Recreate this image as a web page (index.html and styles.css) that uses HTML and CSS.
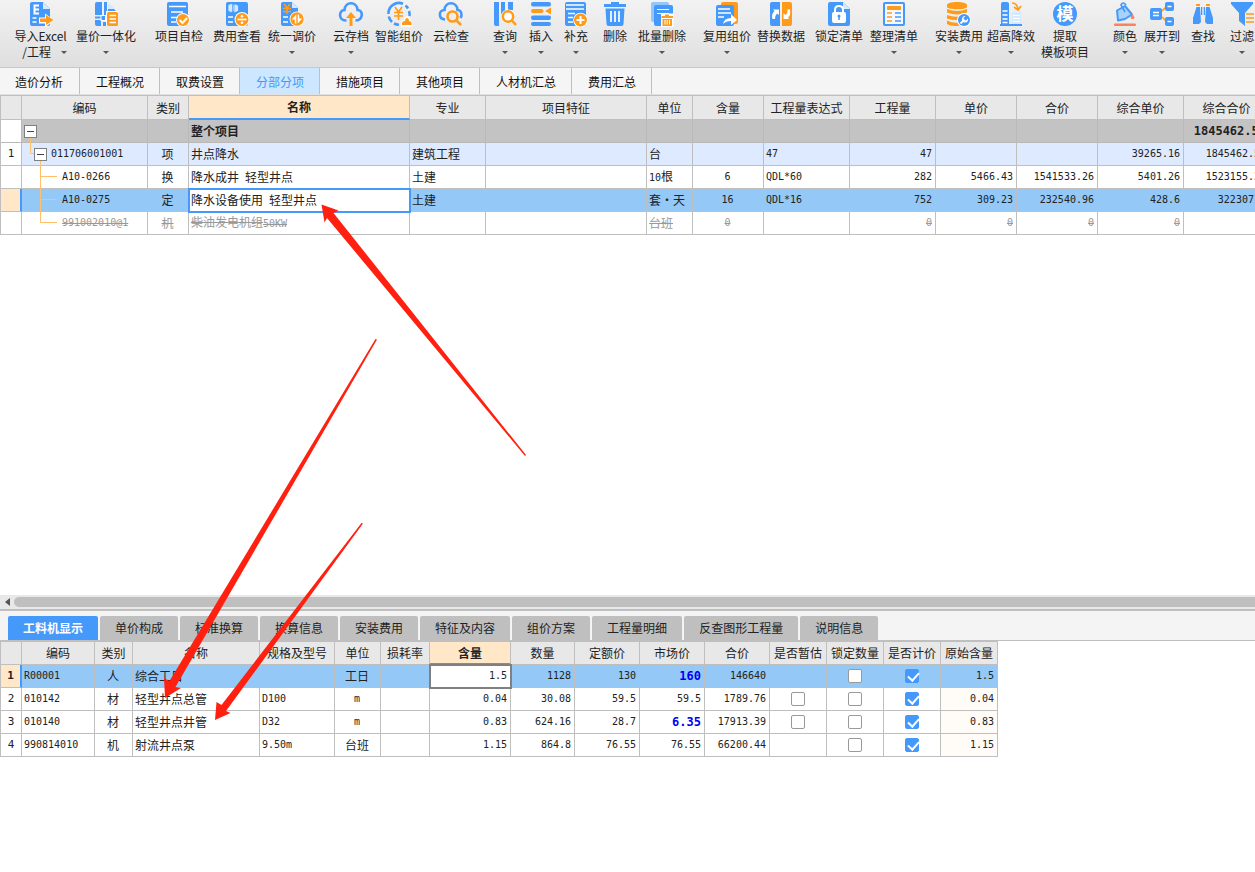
FILE: index.html
```
<!DOCTYPE html>
<html lang="zh-CN">
<head>
<meta charset="utf-8">
<title>分部分项</title>
<link rel="stylesheet" href="styles.css">
</head>
<body>
<div class="app">
<header class="toolbar">
  <button class="tool"><svg viewBox="0 0 24 24"><path class="b" d="M3 0h11l7 7v15q0 2-2 2H3q-2 0-2-2V2q0-2 2-2z"/><path class="l" d="M14 0l7 7h-7z"/><path class="ws" d="M10 3.500H5.500v8H10M5.500 7.500H10"/><path class="ws thin" d="M3.500 16h4M3.500 20h4"/><path class="w" d="M10 15.500h6v-4l9 6.500-9 7.500v-4h-6z"/><path class="o" d="M11 16.500h6v-3.500l7.500 5-7.500 5V20h-6z"/></svg><span>导入Excel</span><span class="sub">/工程<i class="caret"></i></span></button>
  <button class="tool"><svg viewBox="0 0 24 24"><path class="b" d="M3 0h5v13H1V2q0-2 2-2zM10 0h3v13h-3zM14 1l8 8v4h-8zM1 18h6v6H3q-2 0-2-2zM9 20h3v4H9z"/><path class="l" d="M14 0l7 7h-7z"/><path class="b" d="M1 14.500h12v2H1z"/><path class="w" d="M6.500 13h5.500v6H6.500zM12 9h12v15H12z"/><rect class="b" x="7.500" y="14" width="3.500" height="4"/><rect class="o" x="13" y="10" width="11" height="14" rx="1.500"/><path class="ws thin" d="M15.500 13.500h6.500M15.500 17h6.500M15.500 20.500h6.500"/></svg><span>量价一体化</span><i class="caret"></i></button>
  <button class="tool"><svg viewBox="0 0 24 24"><rect class="b" x="0" y="0" width="21" height="24" rx="2"/><path class="ws thin" d="M2 4.500h17M4 10h12M4 15.500h6M4 20h5"/><circle class="w" cx="16" cy="18" r="7"/><circle class="o" cx="16" cy="18" r="6"/><path class="ws" d="M12.500 18l3 3 4.500-5"/></svg><span>项目自检</span></button>
  <button class="tool"><svg viewBox="0 0 24 24"><rect class="b" x="1" y="0" width="22" height="24" rx="2"/><path class="l" d="M3 3l3-1.500L9 3v6L6 10.500 3 9zM7.500 3l2.500-1 3.500 1.500V9L10 10.500 7.500 9z" stroke="#4499fb" stroke-width=".7"/><path class="ws thin" d="M3 15h5M3 20h5"/><circle class="w" cx="17" cy="17.500" r="7.500"/><circle class="o" cx="17" cy="17.500" r="6.500"/><path class="ws thin" d="M12.500 17.500h9"/><circle class="w" cx="17" cy="14.300" r="1.300"/><circle class="w" cx="17" cy="20.700" r="1.300"/></svg><span>费用查看</span></button>
  <button class="tool"><svg viewBox="0 0 24 24"><path class="b" d="M3 0h9l6 6v18H3q-2 0-2-2V2q0-2 2-2z"/><path class="l" d="M12 0l6 6h-6z"/><path class="os thin" d="M4 2l3 4 3-4M7 6v6M3 6.500h8M3 9.500h8"/><path class="ws thin" d="M3 15h5M3 20h5"/><circle class="w" cx="17" cy="17" r="7.500"/><circle class="o" cx="17" cy="17" r="6.700"/><path class="w" d="M16.300 12.500v9h-1.500v-4h-3zM17.700 12.500v9l4.500-5h-3v-4z"/></svg><span>统一调价</span><i class="caret"></i></button>
  <button class="tool"><svg viewBox="0 0 24 24"><path class="bs" d="M7.500 18.500C-1 19-.5 8 5.500 8 6-1 18-1 18.500 8c6 0 6 10-2 10.500"/><path class="o" d="M12 10l5 6h-3.500v8h-3v-8H7z"/></svg><span>云存档</span><i class="caret"></i></button>
  <button class="tool"><svg viewBox="0 0 24 24"><path class="bs" d="M16 1.800A10.500 10.500 0 0 0 1.500 12M1.800 14.500A10.500 10.500 0 0 0 5 20M7 21.500A10.500 10.500 0 0 0 12 22.700M18.500 3.500A10.500 10.500 0 0 1 21 6.500M22 9A10.500 10.500 0 0 1 22.500 14"/><path class="os thin" d="M8 5l3.500 5L15 5M11.500 10v8M7 10.500h9M7 14h9"/><path class="w" d="M14 25c-1-6 2-7 3-7 0-5 6-5 6 0 2 1 3 3 2 7z"/><path class="o" d="M15 23c-.5-3 1-4 3-4 0-4 4-4 4 0 2 0 3 1 2.500 4z"/></svg><span>智能组价</span></button>
  <button class="tool"><svg viewBox="0 0 24 24"><path class="bs" d="M6 17.500C-1 17-.5 8 5.500 8 6-1 18-1 18.500 8c4 0 5 5 3 8"/><circle class="os" cx="13.500" cy="14.500" r="5"/><path class="os" d="M17 18l5 5"/></svg><span>云检查</span></button>
  <button class="tool"><svg viewBox="0 0 24 24"><path class="b" d="M1 0h5v24H3q-2 0-2-2zM8 0h4v9L8 13zM15 0h5v8h-5z"/><circle class="w" cx="15" cy="14.500" r="7"/><circle class="os" cx="15" cy="14.500" r="5.200"/><path class="os" d="M18.500 18l4.500 5"/></svg><span>查询</span><i class="caret"></i></button>
  <button class="tool"><svg viewBox="0 0 24 24"><path class="b" d="M4 0h16q2 0 2 2.200T20 4.400H4Q2 4.400 2 2.200T4 0zM4 13.500h16q2 0 2 2.200t-2 2.200H4q-2 0-2-2.200t2-2.200zM4 20h16q2 0 2 2t-2 2H4q-2 0-2-2t2-2z"/><path class="o" d="M4 7h9l2 2-2 2H4Q2 11 2 9t2-2zM22 5.500v7L16 9z"/></svg><span>插入</span><i class="caret"></i></button>
  <button class="tool"><svg viewBox="0 0 24 24"><rect class="b" x="1" y="0" width="21" height="24" rx="2"/><path class="ws thin" d="M2 3h18M2 7h18M4 11.500h7M4 15.500h5M4 20h5"/><circle class="w" cx="16.500" cy="18" r="7.300"/><circle class="o" cx="16.500" cy="18" r="6.500"/><path class="ws" d="M16.500 14v8M12.500 18h8"/></svg><span>补充</span><i class="caret"></i></button>
  <button class="tool"><svg viewBox="0 0 24 24"><path class="b" d="M8 0h8v2h7v3H1V2h7zM2.500 6.500h19l-1 15.500q0 2-2 2h-13q-2 0-2-2z"/><path class="ws thin" d="M8 9v11M12 9v11M16 9v11"/></svg><span>删除</span></button>
  <button class="tool"><svg viewBox="0 0 24 24"><rect class="lb" x="1" y="0" width="18" height="20" rx="2"/><rect class="b" x="4" y="3" width="19" height="21" rx="2"/><path class="ws fine" d="M7 7.500h12M7 11.500h12"/><path class="w" d="M11 11.500h12.500V25H11z"/><path class="o" d="M15 12.500h4v1.500h4v2H11.500v-2H15zM12.500 17H22v7h-9.500z"/><path class="ws fine" d="M15 18v4.500M17.200 18v4.500M19.500 18v4.500"/></svg><span>批量删除</span><i class="caret"></i></button>
  <button class="tool"><svg viewBox="0 0 24 24"><rect class="o" x="6" y="0" width="17" height="22" rx="2"/><rect class="b" x="1" y="3" width="18" height="21" rx="2"/><path class="ws thin" d="M3 7h12M3 11h13M3 15h6"/><path class="w" d="M8 22q1-6 8-6v-4l6 6-6 5v-4q-5 0-8 3z"/></svg><span>复用组价</span><i class="caret"></i></button>
  <button class="tool"><svg viewBox="0 0 24 24"><path class="b" d="M3 0h8v24H3q-2 0-2-2V2q0-2 2-2z"/><path class="o" d="M13 0h8q2 0 2 2v20q0 2-2 2h-8z"/><path class="w" d="M3.500 17q-1.500-5 2-8L4 7.500h6V13l-2-1.500q-2 2-2 5.500zM21 7.500q1 6-2 8l1 1.500h-5.500v-6l2 2q2.500-2 2-5.500z"/></svg><span>替换数据</span></button>
  <button class="tool"><svg viewBox="0 0 24 24"><path class="b" d="M3 0h13l7 7v15q0 2-2 2H3q-2 0-2-2V2q0-2 2-2z"/><path class="l" d="M16 0l7 7h-7z"/><rect class="w" x="5" y="10" width="14" height="11" rx="2"/><path class="ws" d="M8 11V8q0-4 4-4t4 4v3"/><circle class="b" cx="12" cy="14" r="1.500"/><path class="b" d="M11.300 14h1.500v4h-1.500z"/></svg><span>锁定清单</span></button>
  <button class="tool"><svg viewBox="0 0 24 24"><rect x="2" y="1" width="20" height="22" rx="1" fill="#f4f8fd" stroke="#4499fb" stroke-width="2"/><rect class="o" x="5" y="4" width="14" height="4" rx="1"/><path class="os thin" d="M5 11h5M5 15h5M5 19h5"/><path class="bs thin" d="M13 11h6M13 15h6M13 19h6"/></svg><span>整理清单</span><i class="caret"></i></button>
  <button class="tool"><svg viewBox="0 0 24 24"><path class="o" d="M0 3c0-4 20-4 20 0v2c0 3-20 3-20 0zM0 7q10 4 20 0v3.500q-10 4-20 0zM0 13q8 3 14 1l-3 4q-6 .5-11-1.500zM0 18.500q6 3 11 2l2 3Q4 25 0 22z"/><circle class="w" cx="17" cy="18" r="7"/><circle class="b" cx="17" cy="18" r="6"/><path class="ws" d="M13.500 21.500l4-4"/><path class="w" d="M18.500 14l-2 2 .5 2 2 .5 2-2q.5 4-3 4t-3-3.500 3.500-3z"/></svg><span>安装费用</span><i class="caret"></i></button>
  <button class="tool"><svg viewBox="0 0 24 24"><path class="b" d="M2 2q0-2 2-2h4q2 0 2 2v20h13v2H1v-2h1z"/><path class="ws thin" d="M3.500 9h5M3.500 13h5M3.500 17h5M3.500 20.500h5"/><path class="l" d="M13 10h9v12h-9z"/><path class="ws fine" d="M14 13.500h7M14 16.500h7M14 19.500h7"/><path class="os thin" d="M13 1q5 0 6 6M15 5l4 3 3-4"/></svg><span>超高降效</span><i class="caret"></i></button>
  <button class="tool"><svg viewBox="0 0 24 24"><circle class="b" cx="12" cy="12" r="12"/><text class="mo" x="12" y="18">模</text></svg><span>提取</span><span>模板项目</span></button>
  <button class="tool"><svg viewBox="0 0 24 24"><path d="M4 8.500L12 4l7 8.500-7 4.500-7 1.500z" fill="#a8d2fb" stroke="#4499fb" stroke-width="2" stroke-linejoin="round"/><path class="bs thin" d="M12 10L8 3q2-4 5 0"/><path d="M19.500 12q4 5 0 5t0-5z" fill="#ff805f"/><rect x="1" y="21.500" width="22" height="2.500" rx="1" fill="#ff805f"/></svg><span>颜色</span><i class="caret"></i></button>
  <button class="tool"><svg viewBox="0 0 24 24"><path class="os thin" d="M12 9l4-4M12 15l4 4"/><rect class="b" x="0" y="6" width="12" height="12" rx="2"/><path class="ws thin" d="M3 10.500h6M3 13.500h6"/><rect class="b" x="15" y="0" width="9" height="9" rx="2"/><rect class="b" x="15" y="15" width="9" height="9" rx="2"/><path class="ws thin" d="M17.500 4.500h4M17.500 19.500h4"/></svg><span>展开到</span><i class="caret"></i></button>
  <button class="tool"><svg viewBox="0 0 24 24"><path class="o" d="M5 2h4v2H5zM15 2h4v2h-4z"/><path class="b" d="M5.500 5H9l1 15-2 2H2v-6zM15 5h3.500L22 16v6h-6l-2-2zM10 5h1.300v8H10zM12.700 5H14v8h-1.300z"/></svg><span>查找</span></button>
  <button class="tool"><svg viewBox="0 0 24 24"><path class="b" d="M1 0h22v2l-8 9v13l-6-5v-8L1 2z"/><path class="os thin" d="M16 12h8M16 16h8M16 20h8"/></svg><span>过滤</span><i class="caret"></i></button>
</header>
<nav class="tabs">
  <button>造价分析</button><button>工程概况</button><button>取费设置</button><button class="on">分部分项</button><button>措施项目</button><button>其他项目</button><button>人材机汇总</button><button>费用汇总</button>
</nav>
<main class="upper">
<table class="grid main-grid">
<colgroup><col class="w21"><col class="w126"><col class="w41"><col class="w221"><col class="w76"><col class="w161"><col class="w46"><col class="w71"><col class="w86"><col class="w86"><col class="w81"><col class="w81"><col class="w86"><col class="w86"></colgroup>
<thead><tr><th></th><th>编码</th><th>类别</th><th class="sel">名称</th><th>专业</th><th>项目特征</th><th>单位</th><th>含量</th><th>工程量表达式</th><th>工程量</th><th>单价</th><th>合价</th><th>综合单价</th><th>综合合价</th></tr></thead>
<tbody>
<tr class="total"><td class="gut"></td><td><div class="node"><button class="toggle" aria-label="折叠"></button></div></td><td></td><td class="strong">整个项目</td><td></td><td></td><td></td><td></td><td></td><td></td><td></td><td></td><td></td><td class="n r strong">1845462.52</td></tr>
<tr class="item"><td class="gut">1</td><td><div class="node"><svg class="link1" viewBox="0 0 10 23"><path d="M6.500-5v15.500H10"/></svg><button class="toggle" aria-label="折叠"></button><span class="n code">011706001001</span></div></td><td class="c">项</td><td>井点降水</td><td>建筑工程</td><td></td><td>台</td><td></td><td class="n">47</td><td class="n r">47</td><td></td><td></td><td class="n r">39265.16</td><td class="n r">1845462.52</td></tr>
<tr><td class="gut"></td><td><div class="node"><svg class="link2" viewBox="0 0 38 23"><path d="M16.500-5v28M16.500 10.500H33"/></svg><span class="n">A10-0266</span></div></td><td class="c">换</td><td>降水成井&ensp;轻型井点</td><td>土建</td><td></td><td><span class="n">10</span>根</td><td class="n c">6</td><td class="n">QDL*60</td><td class="n r">282</td><td class="n r">5466.43</td><td class="n r">1541533.26</td><td class="n r">5401.26</td><td class="n r">1523155.32</td></tr>
<tr class="current"><td class="gut"></td><td><div class="node"><svg class="link2" viewBox="0 0 38 23"><path d="M16.500 0v23M16.500 10.500H33"/></svg><span class="n">A10-0275</span></div></td><td class="c">定</td><td class="edit">降水设备使用&ensp;轻型井点</td><td>土建</td><td></td><td>套・天</td><td class="n c">16</td><td class="n">QDL*16</td><td class="n r">752</td><td class="n r">309.23</td><td class="n r">232540.96</td><td class="n r">428.6</td><td class="n r">322307.2</td></tr>
<tr class="off"><td class="gut"></td><td><div class="node"><svg class="link2" viewBox="0 0 38 23"><path d="M16.500 0v10.500H33"/></svg><s class="n">991002010@1</s></div></td><td class="c"><s>机</s></td><td><s>柴油发电机组</s><s class="n">50KW</s></td><td></td><td></td><td><s>台班</s></td><td class="n c"><s>0</s></td><td></td><td class="n r"><s>0</s></td><td class="n r"><s>0</s></td><td class="n r"><s>0</s></td><td class="n r"><s>0</s></td><td class="n r"><s>0</s></td></tr>
</tbody>
</table>
</main>
<div class="scroll"><i class="left"></i><div class="thumb"></div></div>
<section class="lower">
<nav class="subtabs">
  <button class="on">工料机显示</button><button>单价构成</button><button>标准换算</button><button>换算信息</button><button>安装费用</button><button>特征及内容</button><button>组价方案</button><button>工程量明细</button><button>反查图形工程量</button><button>说明信息</button>
</nav>
<table class="grid sub-grid">
<colgroup><col class="w21"><col class="w73"><col class="w38"><col class="w127"><col class="w75"><col class="w46"><col class="w49"><col class="w81"><col class="w64"><col class="w65"><col class="w65"><col class="w65"><col class="w57"><col class="w57"><col class="w57"><col class="w57"></colgroup>
<thead><tr><th></th><th>编码</th><th>类别</th><th>名称</th><th>规格及型号</th><th>单位</th><th>损耗率</th><th class="sel">含量</th><th>数量</th><th>定额价</th><th>市场价</th><th>合价</th><th>是否暂估</th><th>锁定数量</th><th>是否计价</th><th>原始含量</th></tr></thead>
<tbody>
<tr class="current"><td class="gut">1</td><td class="n">R00001</td><td class="c">人</td><td>综合工日</td><td></td><td class="c">工日</td><td></td><td class="n r edit gray">1.5</td><td class="n r">1128</td><td class="n r">130</td><td class="n r strong blue">160</td><td class="n r">146640</td><td></td><td class="c"><input type="checkbox" aria-label="锁定数量"></td><td class="c"><input type="checkbox" aria-label="是否计价" checked></td><td class="n r">1.5</td></tr>
<tr><td class="gut">2</td><td class="n">010142</td><td class="c">材</td><td>轻型井点总管</td><td class="n">D100</td><td class="n c">m</td><td></td><td class="n r">0.04</td><td class="n r">30.08</td><td class="n r">59.5</td><td class="n r">59.5</td><td class="n r">1789.76</td><td class="c"><input type="checkbox" aria-label="是否暂估"></td><td class="c"><input type="checkbox" aria-label="锁定数量"></td><td class="c"><input type="checkbox" aria-label="是否计价" checked></td><td class="n r orig">0.04</td></tr>
<tr><td class="gut">3</td><td class="n">010140</td><td class="c">材</td><td>轻型井点井管</td><td class="n">D32</td><td class="n c">m</td><td></td><td class="n r">0.83</td><td class="n r">624.16</td><td class="n r">28.7</td><td class="n r strong blue">6.35</td><td class="n r">17913.39</td><td class="c"><input type="checkbox" aria-label="是否暂估"></td><td class="c"><input type="checkbox" aria-label="锁定数量"></td><td class="c"><input type="checkbox" aria-label="是否计价" checked></td><td class="n r orig">0.83</td></tr>
<tr><td class="gut">4</td><td class="n">990814010</td><td class="c">机</td><td>射流井点泵</td><td class="n">9.50m</td><td class="c">台班</td><td></td><td class="n r">1.15</td><td class="n r">864.8</td><td class="n r">76.55</td><td class="n r">76.55</td><td class="n r">66200.44</td><td></td><td class="c"><input type="checkbox" aria-label="锁定数量"></td><td class="c"><input type="checkbox" aria-label="是否计价" checked></td><td class="n r orig">1.15</td></tr>
</tbody>
</table>
</section>
<svg class="arrows" width="1255" height="872" viewBox="0 0 1255 872" aria-hidden="true">
  <path d="M321.500 204.500L338.500 210.500 333.500 213 526 455 525 456 327 218 324.500 222.500z"/>
  <path d="M165 698L164 678 169.500 681 375.500 339 377 339.500 175.500 687 181 688z"/>
  <path d="M215 720L216.500 702 221.500 705 361.500 523 363 523.500 226 711 230.500 713z"/>
</svg>
</div>
</body>
</html>
```

FILE: styles.css
```
* { box-sizing: border-box; }
body { margin: 0; background: #fff; color: #222; font: 12px/16px "Noto Sans CJK SC", sans-serif; }
button { font: inherit; color: inherit; border: 0; padding: 0; margin: 0; background: none; white-space: nowrap; }
.app { position: relative; min-height: 100vh; display: flex; flex-direction: column; overflow: hidden; }

.toolbar { display: grid; height: 68px; flex: none; background: linear-gradient(#f2f2f2, #dfdfdf); border-bottom: 1px solid #c8c8c8;
  grid-template-columns: 67px 69px 67px 58px 55px 53px 54px 46px 48px 36px 35px 39px 59px 65px 54px 58px 55px 65px 52px 54px 48px 43px 35px 39px; }
.tool { justify-self: end; display: flex; flex-direction: column; align-items: center; padding-top: 2px; }
.tool svg { width: 24px; height: 24px; margin-bottom: 2px; flex: none; overflow: visible; }
.tool .sub { display: flex; align-items: center; padding-left: 8px; }
.caret { display: block; border: 3px solid transparent; border-top-color: #555; border-bottom: 0; margin-top: 7px; }
.sub .caret { margin: 0 0 0 10px; }
.b { fill: #4499fb; }
.o { fill: #ff9b1a; }
.w { fill: #fff; }
.l { fill: #d5eaff; }
.lb { fill: #93c6fb; }
.ws { fill: none; stroke: #fff; stroke-width: 2; }
.bs { fill: none; stroke: #4499fb; stroke-width: 2.6; }
.os { fill: none; stroke: #ff9b1a; stroke-width: 2.6; }
.thin { stroke-width: 1.7; }
.fine { stroke-width: 1; }
.mo { fill: #fff; font-size: 17px; font-weight: 700; text-anchor: middle; }

.tabs { display: flex; height: 27px; flex: none; background: #f5f5f5; border-bottom: 1px solid #e0e0e0; color: #111; }
.tabs button { padding: 2px 16px 0 15px; border-right: 1px solid #bfbfbf; }
.tabs button + button { padding: 2px 15px 0 16px; }
.tabs button:first-child { padding-right: 16px; }
.tabs .on { background: #cce7ff; color: #4499fb; }

.upper { flex: 1; overflow: hidden; }
.grid { table-layout: fixed; border-collapse: separate; border-spacing: 0; border-top: 1px solid #bfbfbf; border-left: 1px solid #bfbfbf; }
.main-grid { width: 1269px; }
.sub-grid { width: 997px; }
.grid th, .grid td { height: 23px; padding: 0 3px 0 2px; border-right: 1px solid #bfbfbf; border-bottom: 1px solid #bfbfbf; line-height: 20px; text-align: left; white-space: nowrap; overflow: hidden; }
.grid th { background: #e8e8e8; font-weight: 400; text-align: center; padding: 0; }
.main-grid th { height: 24px; }
.grid th.sel { background: #ffe7c8; font-weight: 700; border-bottom: 2px solid #4499fb; }
.grid .n { font-family: "DejaVu Sans Mono", monospace; font-size: 10px; }
.grid .r { text-align: right; }
.grid .c { text-align: center; }
.grid .strong { font-weight: 700; }
.grid .n.strong { font-size: 12px; }
.grid .blue { color: #0000f0; }
.grid .gut { padding: 0; text-align: center; font: 11px/22px "DejaVu Sans Mono", monospace; background: #fff; }
.grid .orig { background: #fffbf6; }
.total td { background: #c3c3c3; border-color: #b9b9b9; }
.item td { background: #deeaff; }
.current td { background: #93c8f7; }
.grid .current .gut { background: #ffe7c8; border-right: 2px solid #4499fb; font-weight: 700; }
.off td { color: #999; }
.grid td.edit { background: #fff; outline: 2px solid #4499fb; outline-offset: -1px; }
.grid td.gray { outline-color: #808080; }
.node { display: flex; align-items: center; height: 22px; }
.grid td:nth-child(2), .grid td.edit { overflow: visible; }
.node svg { flex: none; align-self: flex-start; height: 23px; overflow: visible; fill: none; stroke: #ffc069; }
.link1 { width: 10px; }
.link2 { width: 38px; }
.toggle { width: 13px; height: 13px; flex: none; background: linear-gradient(#444, #444) center / 7px 1px no-repeat #fff; border: 1px solid #808080; }
.code { margin-left: 4px; }

.w21 { width: 21px; } .w38 { width: 38px; } .w41 { width: 41px; } .w46 { width: 46px; } .w49 { width: 49px; }
.w57 { width: 57px; } .w64 { width: 64px; } .w65 { width: 65px; } .w71 { width: 71px; } .w73 { width: 73px; }
.w75 { width: 75px; } .w76 { width: 76px; } .w81 { width: 81px; } .w86 { width: 86px; } .w126 { width: 126px; }
.w127 { width: 127px; } .w161 { width: 161px; } .w221 { width: 221px; }

.scroll { display: flex; align-items: center; flex: none; height: 14px; background: #e8e8e8; padding-left: 5px; }
.scroll .left { border: 4px solid transparent; border-right: 5px solid #555; border-left: 0; }
.thumb { flex: 1; height: 10px; margin-left: 4px; border-radius: 5px 0 0 5px; background: #bfbfbf; }

.lower { flex: none; min-height: 263px; border-top: 2px solid #bfbfbf; }
.subtabs { display: flex; gap: 2px; padding: 5px 8px 0; height: 30px; background: #f4f4f4; border-bottom: 1px solid #bfbfbf; }
.subtabs button { height: 24px; padding: 0 15px; background: #bfbfbf; border-radius: 2px 2px 0 0; }
.subtabs .on { background: #4499fb; color: #fff; font-weight: 700; }

input[type="checkbox"] { appearance: none; position: relative; display: block; width: 14px; height: 14px; margin: 0 auto; background: #fff; border: 1px solid #999; border-radius: 2px; }
input[type="checkbox"]:checked { border-color: #4499fb; background: #4499fb; }
input[type="checkbox"]:checked::after { content: ""; position: absolute; left: 4px; top: 0; width: 5px; height: 9px; border: solid #fff; border-width: 0 2px 2px 0; transform: rotate(42deg); }

.arrows { position: absolute; left: 0; top: 0; pointer-events: none; fill: #ff2010; }
```
